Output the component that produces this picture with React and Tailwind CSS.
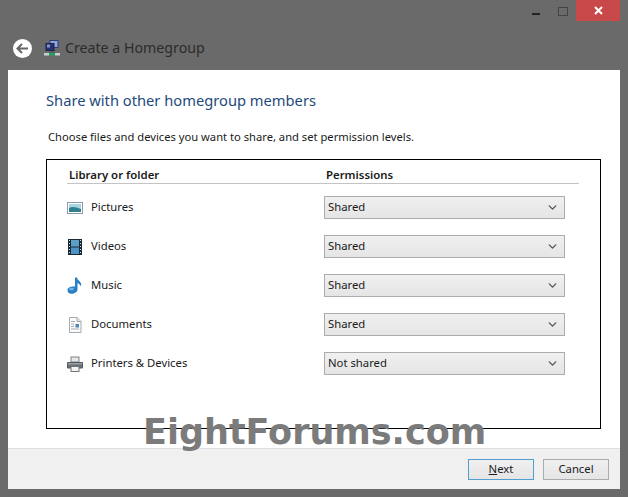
import React from "react";
import { ChevronDown } from "lucide-react";

const rows = [
  { name: "Pictures", value: "Shared", icon: <PicturesIcon /> },
  { name: "Videos", value: "Shared", icon: <VideosIcon /> },
  { name: "Music", value: "Shared", icon: <MusicIcon /> },
  { name: "Documents", value: "Shared", icon: <DocumentsIcon /> },
  { name: "Printers & Devices", value: "Not shared", icon: <PrinterIcon /> },
];

function PicturesIcon() {
  return (
    <svg width="16" height="16" viewBox="0 0 16 16">
      <rect x="0.5" y="2.5" width="15" height="11" fill="#fff" stroke="#8b9aa5" />
      <rect x="2" y="4" width="12" height="8" fill="#a9d6de" />
      <path d="M2 8 C5 6 9 7 14 9 V12 H2 Z" fill="#2f7f8f" />
    </svg>
  );
}

function VideosIcon() {
  return (
    <svg width="16" height="16" viewBox="0 0 16 16">
      <rect x="1" y="0" width="14" height="16" fill="#1d2a33" />
      <rect x="4" y="1" width="8" height="6.5" fill="#5b9fc9" />
      <rect x="4" y="8.5" width="8" height="6.5" fill="#4a94c8" />
      <path d="M2 1.5h1M2 4.5h1M2 7.5h1M2 10.5h1M2 13.5h1M13 1.5h1M13 4.5h1M13 7.5h1M13 10.5h1M13 13.5h1" stroke="#cfe0ea" strokeWidth="1.2" />
    </svg>
  );
}

function MusicIcon() {
  return (
    <svg width="16" height="17" viewBox="0 0 16 17">
      <path d="M0.5 13 C0.5 10.5 4 9 8 9.5 V0.5 H10 C10.5 4 15.5 4.5 14 9.5 C13.3 7.5 11.5 6.5 10.5 6 V12.5 C10.5 15 7.5 16.8 4.5 16.8 C2 16.8 0.5 15.5 0.5 13 Z" fill="#2a7fc6" />
      <ellipse cx="4.5" cy="12" rx="2.5" ry="1.3" fill="#6fb4e6" />
    </svg>
  );
}

function DocumentsIcon() {
  return (
    <svg width="14" height="16" viewBox="0 0 14 16">
      <path d="M1.5 0.5 H9 L13 4.5 V15.5 H1.5 Z" fill="#fbfbfb" stroke="#a3a9ae" />
      <path d="M9 0.5 V4.5 H13" fill="#dfe3e6" stroke="#a3a9ae" />
      <path d="M3 4.5h4M3 7h3M3 9.5h3M3 12h8" stroke="#a8b0b6" />
      <rect x="7.5" y="7" width="3.5" height="3.5" fill="#4d86b8" />
    </svg>
  );
}

function PrinterIcon() {
  return (
    <svg width="16" height="16" viewBox="0 0 16 16">
      <rect x="4" y="1" width="8" height="5" fill="#e4e6e8" stroke="#7d8488" />
      <path d="M0.5 6.5 H15.5 V12 H0.5 Z" fill="#6a7075" stroke="#555a5e" />
      <rect x="1" y="7" width="14" height="1.5" fill="#9a9fa3" />
      <rect x="4" y="10.5" width="8" height="5" fill="#f4f4f4" stroke="#6f767a" />
    </svg>
  );
}

function HomegroupIcon() {
  return (
    <svg width="16" height="16" viewBox="0 0 16 16">
      <rect x="6" y="0.5" width="8" height="7" fill="#8fa6d8" stroke="#2c3d78" />
      <rect x="2" y="3.5" width="8" height="7" fill="#26336e" stroke="#1a2350" />
      <rect x="3" y="4.5" width="3" height="3" fill="#7f95d0" />
      <rect x="5" y="11" width="6" height="2" fill="#57606b" />
      <rect x="0" y="13" width="5" height="2.5" fill="#c9cdd0" />
      <rect x="5" y="13" width="6" height="2.5" fill="#22a35a" />
      <rect x="11" y="13" width="5" height="2.5" fill="#c9cdd0" />
    </svg>
  );
}

export default function App() {
  return (
    <div className="relative flex h-[497px] w-[628px] flex-col overflow-hidden bg-[#6a6a6a] font-['Noto_Sans',sans-serif] text-[11.3px] text-[#1a1a1a]">
      {/* title bar */}
      <div className="flex h-[22px] shrink-0 items-start justify-end pr-[8px]">
        <div className="mt-[13px] mr-[18px] h-[2px] w-[8px] bg-[#222]" />
        <div className="mt-[7px] mr-[8px] h-[9px] w-[10px] border border-[#444]" />
        <div className="flex h-[21px] w-[44px] items-center justify-center bg-[#c9484a] text-white">
          <svg width="9" height="9" viewBox="0 0 9 9">
            <path d="M1 1 L8 8 M8 1 L1 8" stroke="#fff" strokeWidth="2" />
          </svg>
        </div>
      </div>

      {/* nav row */}
      <div className="flex h-[48px] shrink-0 items-center pt-[4px] pl-[13px]">
        <div className="flex h-[19px] w-[19px] items-center justify-center rounded-full bg-white">
          <svg width="13" height="11" viewBox="0 0 13 11">
            <path d="M6 1 L1.5 5.5 L6 10 M2 5.5 H12" fill="none" stroke="#666" strokeWidth="2" />
          </svg>
        </div>
        <div className="ml-[12px]">
          <HomegroupIcon />
        </div>
        <span className="ml-[5px] text-[14.2px] text-[#2b2b2b]">Create a Homegroup</span>
      </div>

      {/* body */}
      <div className="mx-[8px] mb-[8px] flex min-h-0 flex-1 flex-col bg-white">
        <div className="flex-1 pt-[19px] pl-[38px]">
          <h1 className="text-[14.7px] leading-[22px] font-normal text-[#1f4a7d]">Share with other homegroup members</h1>
          <p className="mt-[18px] ml-[2px] text-[11.2px] leading-[16px]">
            Choose files and devices you want to share, and set permission levels.
          </p>
          <div className="mt-[14px] h-[270px] w-[555px] border border-black pt-[7px] pr-[21px] pl-[20px]">
            <div className="flex h-[17px] border-b border-[#c4c4c4] pl-[2px] text-[11.4px] leading-[15px] font-semibold">
              <div className="w-[257px]">Library or folder</div>
              <div>Permissions</div>
            </div>
            <div className="mt-[12px] flex flex-col gap-[16px]">
              {rows.map((row) => (
                <div key={row.name} className="flex h-[23px] items-start">
                  <div className="flex h-[23px] w-[24px] items-center justify-center pr-[8px]">{row.icon}</div>
                  <div className="w-[233px] pt-[3px] leading-[16px]">{row.name}</div>
                  <div className="flex h-[23px] w-[241px] items-center justify-between border border-[#acacac] bg-gradient-to-b from-[#f0f0f0] to-[#e5e5e5] pr-[5px] pl-[3px]">
                    <span>{row.value}</span>
                    <ChevronDown size={13} strokeWidth={2.5} color="#555" />
                  </div>
                </div>
              ))}
            </div>
          </div>
        </div>

        {/* footer */}
        <div className="flex h-[41px] shrink-0 items-start justify-end gap-[9px] border-t border-[#dfdfdf] bg-[#f0f0f0] pt-[10px] pr-[11px]">
          <button className="h-[21px] w-[66px] border border-[#4f9fcf] bg-gradient-to-b from-[#f0f0f0] to-[#e5e5e5] text-[11.3px]">
            <span className="underline">N</span>ext
          </button>
          <button className="h-[21px] w-[66px] border border-[#acacac] bg-gradient-to-b from-[#f0f0f0] to-[#e5e5e5] text-[11.3px]">
            Cancel
          </button>
        </div>
      </div>

      {/* watermark */}
      <div className="absolute top-[408px] left-[143px] font-['DejaVu_Sans',sans-serif] text-[35px] leading-[48px] font-bold whitespace-nowrap text-[#7b7b7b]">
        EightForums.com
      </div>
    </div>
  );
}
